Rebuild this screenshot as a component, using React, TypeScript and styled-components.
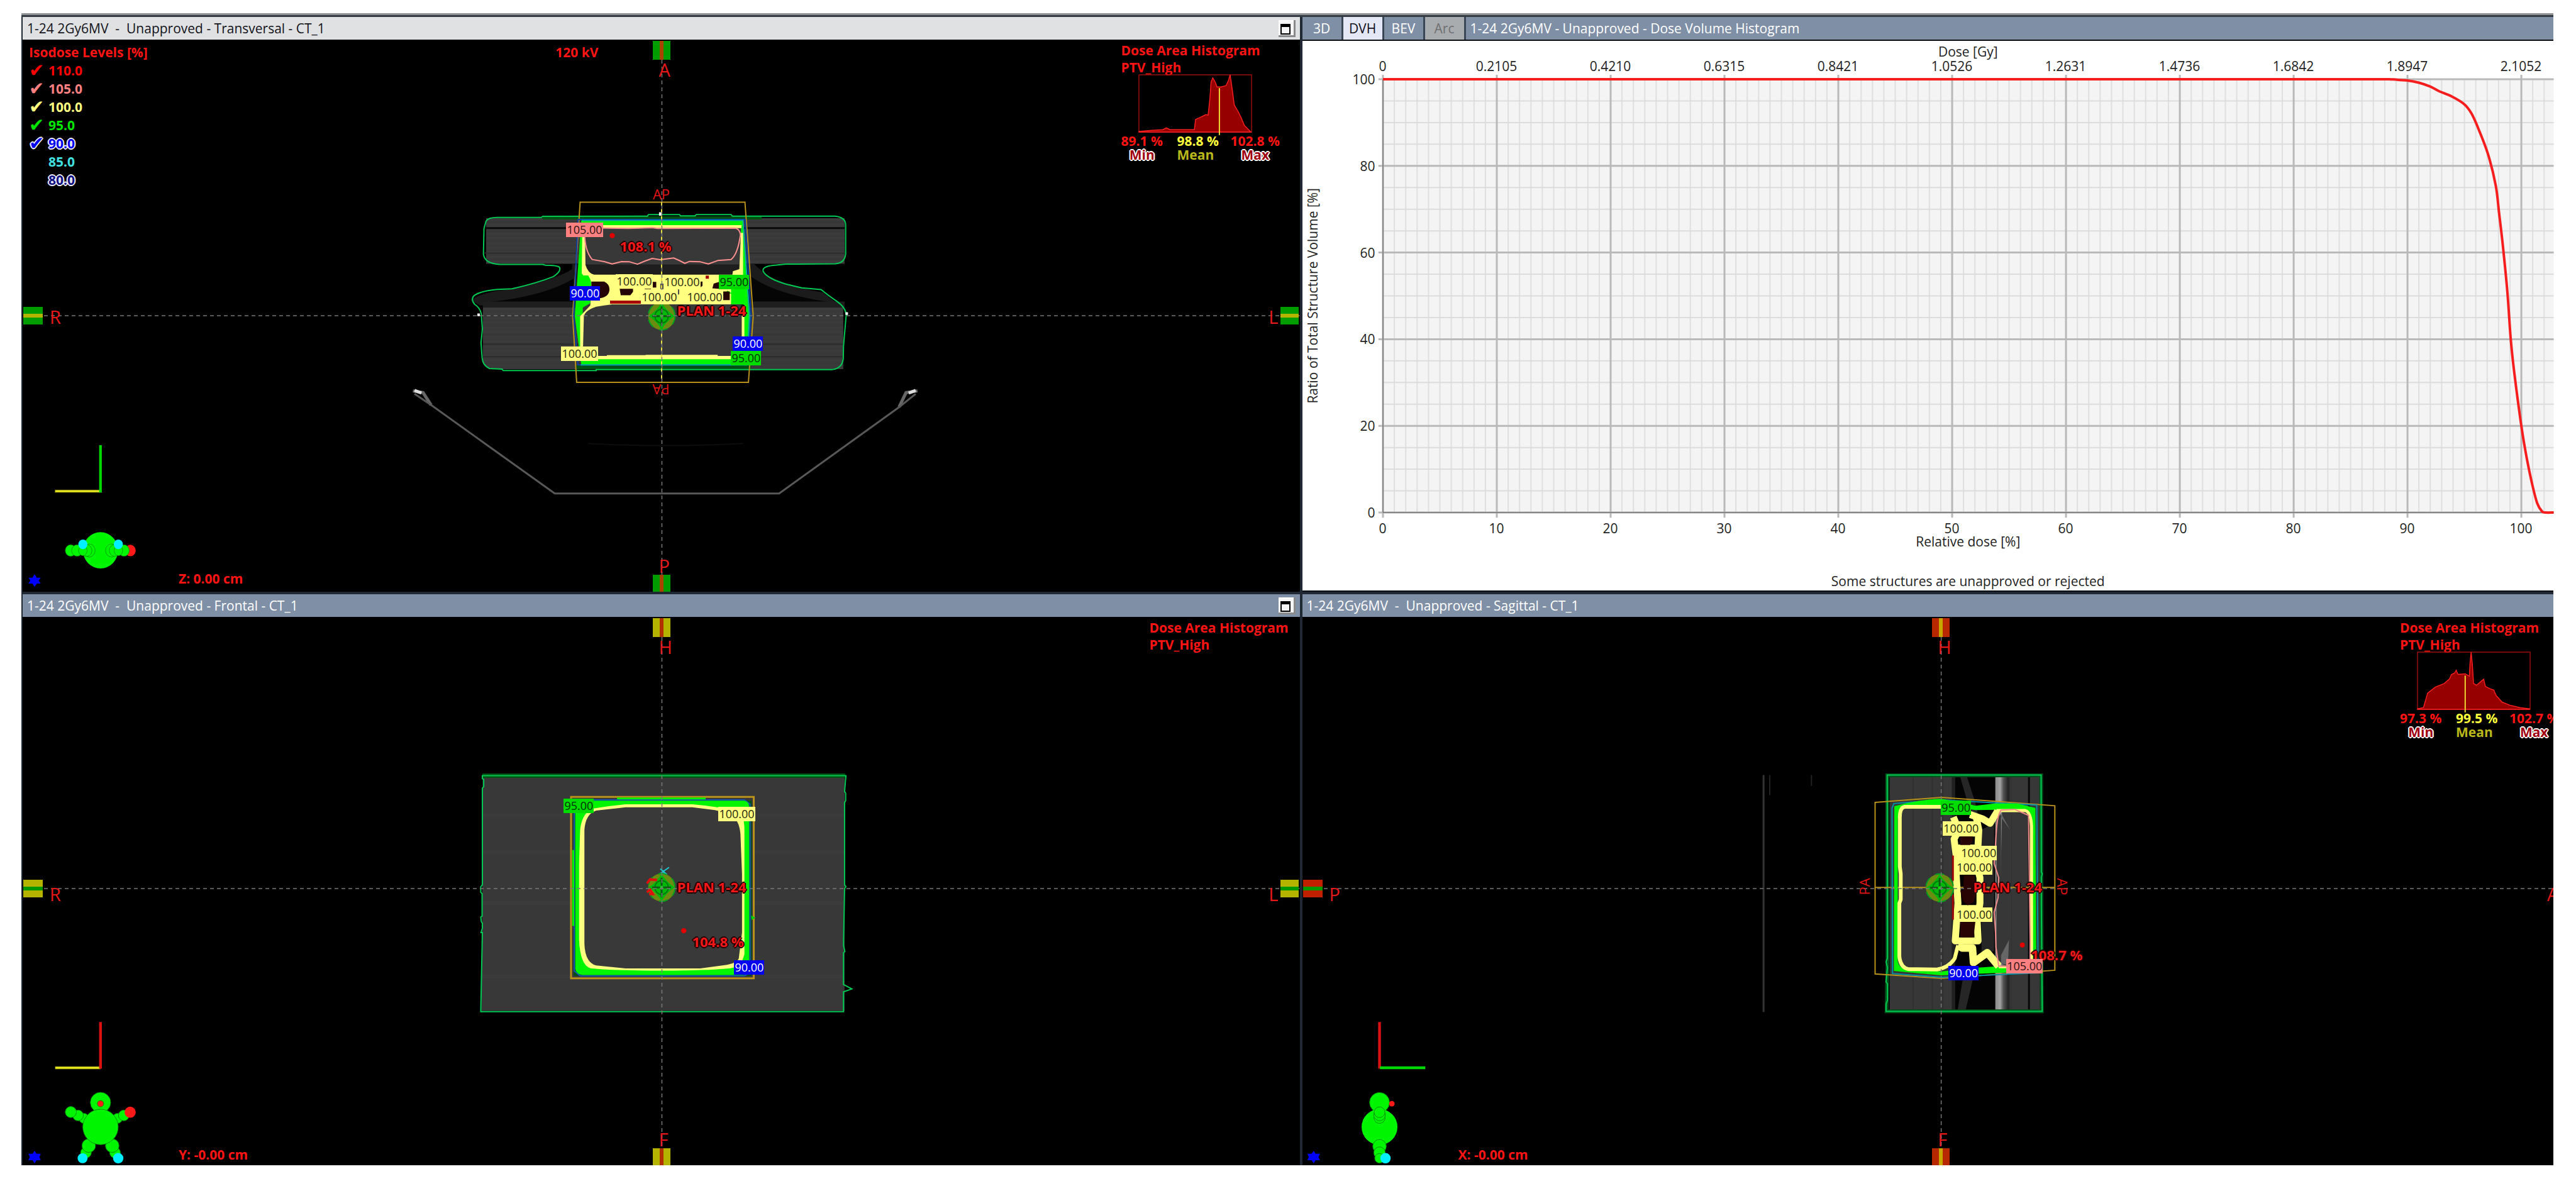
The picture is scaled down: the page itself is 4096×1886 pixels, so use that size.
import React from 'react';
import styled, { createGlobalStyle, css } from 'styled-components';

const GlobalStyle = createGlobalStyle`
  * { box-sizing: border-box; }
  body { margin: 0; background: #fff; }
`;

const font = `'Open Sans', 'Noto Sans', sans-serif`;
const navy = '#1f2833';
const slate = '#7f8fa6';
const RED = '#ff1414';
const ISO_100 = '#ffff80';
const ISO_95 = '#00f500';
const OUTLINE = '#00c853';

/* ---------- shell ---------- */

const Page = styled.main`
  display: flex;
  height: 100vh;
  padding: 21px 36px 33px 34px;
  font: 21px/27px ${font};
`;

const Workspace = styled.div`
  flex: 1;
  min-width: 0;
  display: grid;
  grid-template-columns: minmax(0, 2030fr) minmax(0, 1989fr);
  grid-template-rows: minmax(0, 914fr) minmax(0, 908fr);
  gap: 4px;
  padding: 3px 0 0 2px;
  background: ${navy};
  border-top: 3px solid #8d9193;
  box-shadow: inset 0 3px 0 #343b42;
`;

const Panel = styled.section`
  display: flex;
  flex-direction: column;
  min-width: 0;
  min-height: 0;
`;

const TitleBar = styled.header<{ $active?: boolean }>`
  display: flex;
  align-items: center;
  flex: none;
  height: 36px;
  padding-right: 7px;
  background: ${(p) => (p.$active ? '#dfe1e2' : slate)};
  color: ${(p) => (p.$active ? '#14141c' : '#fff')};
`;

const Title = styled.h2`
  flex: 1;
  margin: 0;
  padding-left: 7px;
  font: 400 21px/27px ${font};
  white-space: pre;
`;

const MaxButton = styled.button`
  width: 27px;
  height: 27px;
  padding: 3px 0 0 3px;
  border: 0;
  background: #f6f6f6;
  box-shadow: inset -3px -3px 0 #8a8a8a, inset 2px 2px 0 #fff;
  line-height: 0;
`;

const MaxGlyph = styled.span`
  display: block;
  width: 16px;
  height: 17px;
  border: 2px solid #000;
  border-top-width: 5px;
`;

const Maximize = () => (
  <MaxButton aria-label="Maximize"><MaxGlyph /></MaxButton>
);

/* ---------- slice viewport ---------- */

const Viewport = styled.div`
  position: relative;
  flex: 1;
  min-height: 0;
  overflow: hidden;
  background: #000;
`;

const Layer = styled.svg`
  position: absolute;
  inset: 0;
  width: 100%;
  height: 100%;
`;

const Origin = styled.div<{ $cx: string; $cy: string }>`
  position: absolute;
  left: ${(p) => p.$cx};
  top: ${(p) => p.$cy};
  width: 0;
  height: 0;
`;

const Scene = styled.svg`
  position: absolute;
  left: 0;
  top: 0;
  width: 1px;
  height: 1px;
  overflow: visible;
  path, rect, ellipse { vector-effect: non-scaling-stroke; }
`;

type TagKind = '105' | '100' | '95' | '90';
const tagColors: Record<TagKind, [string, string]> = {
  '105': ['#ff8080', '#2b1010'],
  '100': [ISO_100, '#26260c'],
  '95': ['#00dc00', '#003000'],
  '90': ['#0000f0', '#fff'],
};

const Tag = styled.span<{ $kind: TagKind; $x: number; $y: number }>`
  position: absolute;
  left: ${(p) => p.$x}px;
  top: ${(p) => p.$y}px;
  padding: 0 1px;
  background: ${(p) => tagColors[p.$kind][0]};
  color: ${(p) => tagColors[p.$kind][1]};
  font-size: 18px;
  line-height: 23px;
  white-space: nowrap;
`;

const Note = styled.span<{ $x: number; $y: number }>`
  position: absolute;
  left: ${(p) => p.$x}px;
  top: ${(p) => p.$y}px;
  color: #f01818;
  font-weight: 700;
  font-size: 22px;
  line-height: 24px;
  white-space: nowrap;
  text-shadow: 2px 0 #200, -2px 0 #200, 0 2px #200, 0 -2px #200, 1px 1px #200, -1px -1px #200;
`;

const BeamLabel = styled.span<{ $x: number; $y: number; $turn?: number }>`
  position: absolute;
  left: ${(p) => p.$x}px;
  top: ${(p) => p.$y}px;
  color: #e01414;
  font-size: 22px;
  line-height: 24px;
  transform: translate(-50%, -50%) rotate(${(p) => p.$turn ?? 0}deg);
`;

const edges = {
  top: css`top: 2px; width: 28px; height: 30px; transform: translateX(-50%);`,
  bottom: css`bottom: 0; width: 28px; height: 27px; transform: translateX(-50%);`,
  left: css`left: 1px; width: 31px; height: 28px; transform: translateY(-50%);`,
  right: css`right: 2px; width: 29px; height: 28px; transform: translateY(-50%);`,
};
type Edge = keyof typeof edges;

const Marker = styled.i<{ $edge: Edge; $at: string; $outer: string; $inner: string }>`
  position: absolute;
  ${(p) => edges[p.$edge]}
  ${(p) => (p.$edge === 'top' || p.$edge === 'bottom' ? `left: ${p.$at};` : `top: ${p.$at};`)}
  background: linear-gradient(
    ${(p) => (p.$edge === 'top' || p.$edge === 'bottom' ? 'to right' : 'to bottom')},
    ${(p) => `${p.$outer} 40%, ${p.$inner} 40%, ${p.$inner} 61%, ${p.$outer} 61%`}
  );
`;

const letterEdges = {
  top: css`top: 30px; margin-left: -5px;`,
  bottom: css`bottom: 23px; margin-left: -5px;`,
  left: css`left: 43px; margin-top: -16px;`,
  right: css`right: 34px; margin-top: -16px;`,
};

const EdgeLetter = styled.span<{ $edge: Edge; $at: string }>`
  position: absolute;
  ${(p) => letterEdges[p.$edge]}
  ${(p) => (p.$edge === 'top' || p.$edge === 'bottom' ? `left: ${p.$at};` : `top: ${p.$at};`)}
  color: #e61818;
  font: 400 29px/36px ${font};
`;

const Readout = styled.span<{ $x: number; $bottom: number }>`
  position: absolute;
  left: ${(p) => p.$x}px;
  bottom: ${(p) => p.$bottom}px;
  color: ${RED};
  font-weight: 700;
`;

const Corner = styled.svg`
  position: absolute;
  left: 0;
  bottom: 0;
  width: 247px;
  height: 261px;
`;

interface View { sx: number; sy: number; ox: number; oy: number }
const local = (v: View, x: number, y: number) => ({
  $x: Math.round((x - v.ox) * v.sx),
  $y: Math.round((y - v.oy) * v.sy),
});
const toView = (v: View) => `scale(${v.sx} ${v.sy}) translate(${-v.ox} ${-v.oy})`;

type TagData = [TagKind, string, number, number];
const Tags = ({ view, items }: { view: View; items: TagData[] }) => (
  <>
    {items.map(([kind, text, x, y], i) => (
      <Tag key={i} $kind={kind} {...local(view, x, y)}>{text}</Tag>
    ))}
  </>
);

const CrossLines = ({ cx, cy }: { cx: string; cy: string }) => (
  <Layer aria-hidden="true">
    <g stroke="#777" strokeWidth="1.5" strokeDasharray="6 5">
      <line x1={cx} x2={cx} y1="32" y2="100%" />
      <line x1="34" x2="100%" y1={cy} y2={cy} />
    </g>
  </Layer>
);

const IsoCenter = ({ rx, ry }: { rx: number; ry: number }) => (
  <g>
    <ellipse rx={rx} ry={ry} fill="#6b8c10" />
    <ellipse rx={rx} ry={ry} fill="none" stroke="#00a020" strokeWidth="2" strokeDasharray="14 10" />
    <path d={`M0 ${-ry} Q${rx * 0.35} ${-ry * 0.35} ${rx} 0 Q${rx * 0.35} ${ry * 0.35} 0 ${ry} Q${-rx * 0.35} ${ry * 0.35} ${-rx} 0 Q${-rx * 0.35} ${-ry * 0.35} 0 ${-ry}Z`} fill="#00b80a" />
    <ellipse rx={rx * 0.5} ry={ry * 0.5} fill="none" stroke="#007a10" strokeWidth="2" />
    <path d={`M${-rx * 0.7} 0H${rx * 0.7}M0 ${-ry * 0.7}V${ry * 0.7}`} stroke="#0b5a10" strokeWidth="3" />
    <ellipse rx={rx * 0.12} ry={ry * 0.12} fill="#00e000" />
  </g>
);

/* ---------- dose area histogram ---------- */

const DahBox = styled.aside<{ $offset: number }>`
  position: absolute;
  top: 4px;
  left: calc(100% - ${(p) => p.$offset}px);
  width: 260px;
  color: ${RED};
  font-weight: 700;
  white-space: nowrap;
`;

const DahPlot = styled.svg`
  display: block;
  width: 180px;
  height: 92px;
  margin: -2px 0 2px 28px;
  overflow: visible;
`;

const DahValues = styled.div`
  display: grid;
  grid-template-columns: 89px 85px 86px;
  justify-items: start;
  line-height: 22px;
`;

const DahCell = styled.div<{ $mean?: boolean }>`
  text-align: ${(p) => (p.$mean ? 'left' : 'center')};
  color: ${(p) => (p.$mean ? '#ffff3c' : RED)};
`;

const DahCaption = styled.div<{ $mean?: boolean }>`
  font-weight: 700;
  color: ${(p) => (p.$mean ? '#b9b91c' : '#a00010')};
  ${(p) => !p.$mean && css`
    text-shadow: 2px 0 #fff, -2px 0 #fff, 0 2px #fff, 0 -2px #fff, 1px 1px #fff, -1px -1px #fff, 1px -1px #fff, -1px 1px #fff;
  `}
`;

interface DahProps { offset: number; shape?: string; mean?: number; values?: [string, string, string] }
const DoseAreaHistogram = ({ offset, shape, mean, values }: DahProps) => (
  <DahBox $offset={offset}>
    <div>Dose Area Histogram</div>
    <div>PTV_High</div>
    {shape && values && (
      <>
        <DahPlot viewBox="0 0 190 96" preserveAspectRatio="none">
          <rect x="0" y="0" width="189" height="95" fill="none" stroke="#a01010" strokeWidth="1.5" />
          <path d={shape} fill="#960000" stroke="#ff2020" strokeWidth="1.5" />
          <path d={`M${mean} ${mean === 80 ? 39 : 22}V100`} stroke="#f5e532" strokeWidth="2" />
        </DahPlot>
        <DahValues>
          <DahCell>{values[0]}<DahCaption>Min</DahCaption></DahCell>
          <DahCell $mean>{values[1]}<DahCaption $mean>Mean</DahCaption></DahCell>
          <DahCell>{values[2]}<DahCaption>Max</DahCaption></DahCell>
        </DahValues>
      </>
    )}
  </DahBox>
);

/* ---------- isodose legend ---------- */

const Legend = styled.fieldset`
  position: absolute;
  left: 10px;
  top: 6px;
  margin: 0;
  padding: 0;
  border: 0;
  font-weight: 700;
  line-height: 29px;
`;

const LegendTitle = styled.legend`
  padding: 0;
  color: ${RED};
`;

const Level = styled.label<{ $color: string; $halo?: boolean }>`
  display: flex;
  color: ${(p) => p.$color};
  ${(p) => p.$halo && css`
    text-shadow: 2px 0 #eef, -2px 0 #eef, 0 2px #eef, 0 -2px #eef, 1px 1px #eef, -1px -1px #eef, 1px -1px #eef, -1px 1px #eef;
  `}
`;

const LevelTick = styled.input`
  appearance: none;
  width: 31px;
  height: 29px;
  margin: 0;
  color: inherit;
  font: 700 29px/29px 'DejaVu Sans', sans-serif;
  text-shadow: inherit;
  &:checked::before { content: '✔'; }
`;

const levels = [
  { value: '110.0', color: '#ff0000', on: true },
  { value: '105.0', color: '#ff8080', on: true },
  { value: '100.0', color: '#ffff80', on: true },
  { value: '95.0', color: '#00e600', on: true },
  { value: '90.0', color: '#0000f0', on: true, halo: true },
  { value: '85.0', color: '#40e0e0', on: false },
  { value: '80.0', color: '#101080', on: false, halo: true },
];

const TubeVoltage = styled.span`
  position: absolute;
  left: calc(50% - 168px);
  top: 7px;
  color: ${RED};
  font-weight: 700;
`;

/* ---------- transversal ---------- */

const middle = '50.06%';
const tv: View = { sx: 0.42475, sy: 0.3398, ox: 775, oy: 638 };
const bodyOutline =
  'M118 195Q126 178 160 178L325 178L330 173L722 172L726 165L842 165L846 171L900 171L905 165L1035 165L1040 172L1425 172Q1465 178 1464 215L1464 350Q1460 392 1425 395L1240 397L1205 401Q1150 405 1155 430Q1170 465 1240 490L1300 508L1372 516Q1400 545 1430 570Q1465 600 1466 635L1456 780L1455 840Q1450 885 1415 890L530 890L530 895L182 895L178 888L130 885Q105 870 103 835L99 765L104 700L100 630Q95 600 75 585Q58 560 75 542Q100 522 160 515L215 512Q310 485 370 455Q400 430 393 412Q385 402 340 402L330 398L170 398Q112 395 108 350L110 230Z';

const Transversal = () => (
  <Panel>
    <TitleBar $active>
      <Title>1-24 2Gy6MV  -  Unapproved - Transversal - CT_1</Title>
      <Maximize />
    </TitleBar>
    <Viewport>
      <Origin $cx={middle} $cy="50%">
        <Scene aria-hidden="true">
          <defs>
            <pattern id="rows" width="10" height="44" patternUnits="userSpaceOnUse">
              <rect width="10" height="44" fill="#393939" />
              <rect y="8" width="10" height="4" fill="#3d3d3d" />
              <rect y="22" width="10" height="3" fill="#353535" />
              <rect y="33" width="10" height="4" fill="#3c3c3c" />
            </pattern>
          </defs>
          <g transform={toView(tv)}>
            <path d="M-156 990L-118 998L-88 1056M1733 990L1690 998L1664 1066" fill="none" stroke="#666" strokeWidth="5" />
            <path d="M-150 988l26 12M1726 988l-26 12" stroke="#ddd" strokeWidth="5" />
            <path d="M-150 1004L-88 1056L375 1470L1215 1470L1664 1066L1726 1004" fill="none" stroke="#585858" strokeWidth="3" />
            <path d="M500 1236Q775 1256 1080 1236" fill="none" stroke="#0d0d0d" strokeWidth="2" />
            <path d="M118 182H1460V395H118Z" fill="url(#rows)" />
            <path d="M440 395H1120L1160 440Q1240 500 1380 530L1440 590H95L60 565Q110 525 200 515Q380 470 440 420Z" fill="#1b1b1b" />
            <path d="M120 575Q330 550 445 465L445 590H120ZM1110 455Q1200 540 1430 580L1110 590Z" fill="#050505" />
            <path d="M106 578H1455V888H130Q106 870 106 840Z" fill="url(#rows)" />
            <path d="M106 572H1460V600H106Z" fill="#1e1e1e" />
            <path d="M112 228H1462" stroke="#0a0a0a" strokeWidth="3" />
            <path d="M112 345H1462M106 771H1458M106 830H1458" stroke="#2b2b2b" strokeWidth="2" />
            <path d="M330 173H1150V188H330ZM455 870H1110V888H455Z" fill="#005212" />
            <path d={bodyOutline} fill="none" stroke={OUTLINE} strokeWidth="2" />
            <path d="M90 628v12M1468 622v12M770 154v16" stroke="#fff" strokeWidth="4" />

            <path d="M470 107H1087L1118 640L1100 950H457L442 640Z" fill="none" stroke="#b8921c" strokeWidth="2" />
            <path d="M462 188H1088L1110 640L1098 868H462L446 640Z" fill="none" stroke="#0b3fa8" strokeWidth="2" />
            <path d="M474 192L1080 192L1106 640L1096 866L474 866L450 640Z M490 214L488 640L482 838L1080 838L1084 640L1070 214Z" fill={ISO_95} fillRule="evenodd" />
            <path d="M476 192H1080L1104 640L1094 868H472" fill="none" stroke="#00a8a8" strokeWidth="2" />

            <path d="M488 214H1072V838H480V590Z" fill="#383838" />
            <path d="M488 398H1072V450H488Z" fill="#1e1e1e" />
            <path d="M488 214H1074V228H488Z" fill={ISO_100} />
            <path d="M478 826H570V823H715V821H985V826H1085V842H478Z" fill={ISO_100} />
            <path d="M478 240H488L490 400Q500 440 522 446H1040L1042 430L1066 420L1072 250H1080V480L1050 500L1035 585H590Q560 590 530 596Q490 612 484 640L480 826H470V640L508 590L512 500L476 440Z" fill={ISO_100} />
            <path d="M1075 600H1085V826H1075Z" fill={ISO_100} />
            <path d="M468 450H500Q516 480 510 500L508 580L480 600L468 640Z" fill={ISO_95} />
            <path d="M1035 460H1090V585H1035ZM1020 520L1040 535H1018Z" fill={ISO_95} />
            <path d="M512 478H560Q580 490 580 515Q578 550 545 556L512 550ZM618 512H668V526L658 542H622ZM712 480H755V506H738L735 514H712ZM905 478H928V498L910 515ZM970 488L990 480V512L965 510ZM1005 525H1030V565H1005Z" fill="#240404" />
            <path d="M770 488h12v26h-12zM836 515h5v24h-5z" fill="#4a4a4a" />
            <path d="M582 575H702M940 458h12" stroke="#a80808" strokeWidth="5" />
            <path d="M487 240Q485 330 515 375L560 385L590 396L625 385L655 386L685 397Q715 380 740 370L770 376L820 368Q840 378 862 393L880 384L920 386L950 396L985 380L1035 375Q1060 350 1070 260Q1068 232 1050 228L760 230L740 226L650 230L500 227" fill="none" stroke="#ff9090" strokeWidth="2" strokeLinejoin="round" />
            <ellipse cx="590" cy="263" rx="10" ry="12" fill="#e00000" />
            <path d="M775 107V950" stroke="#e8e040" strokeWidth="2" strokeDasharray="6 5" />
            <g transform="translate(775 640)"><IsoCenter rx={50} ry={65} /></g>
          </g>
        </Scene>
      </Origin>
      <CrossLines cx={middle} cy="50%" />
      <Origin $cx={middle} $cy="50%">
        <BeamLabel {...local(tv, 773, 66)}>AP</BeamLabel>
        <BeamLabel $turn={180} {...local(tv, 773, 985)}>PA</BeamLabel>
        <Note {...local(tv, 618, 277)}>108.1 %</Note>
        <Note {...local(tv, 831, 576)}>PLAN 1-24</Note>
        <Tags
          view={tv}
          items={[
            ['105', '105.00', 416, 203],
            ['100', '100.00', 604, 443],
            ['100', '100.00', 783, 448],
            ['95', '95.00', 989, 447],
            ['100', '100.00', 698, 517],
            ['100', '100.00', 867, 517],
            ['90', '90.00', 432, 500],
            ['90', '90.00', 1041, 735],
            ['95', '95.00', 1033, 804],
            ['100', '100.00', 399, 782],
          ]}
        />
      </Origin>
      <Marker $edge="top" $at={middle} $outer="#009c00" $inner="#a84400" />
      <Marker $edge="bottom" $at={middle} $outer="#009c00" $inner="#a84400" />
      <Marker $edge="left" $at="50%" $outer="#009c00" $inner="#b4b400" />
      <Marker $edge="right" $at="50%" $outer="#009c00" $inner="#b4b400" />
      <EdgeLetter $edge="top" $at={middle}>A</EdgeLetter>
      <EdgeLetter $edge="bottom" $at={middle}>P</EdgeLetter>
      <EdgeLetter $edge="left" $at="50%">R</EdgeLetter>
      <EdgeLetter $edge="right" $at="50%">L</EdgeLetter>
      <Legend>
        <LegendTitle>Isodose Levels [%]</LegendTitle>
        {levels.map((l) => (
          <Level key={l.value} $color={l.color} $halo={l.halo}>
            <LevelTick type="checkbox" defaultChecked={l.on} />
            {l.value}
          </Level>
        ))}
      </Legend>
      <TubeVoltage>120 kV</TubeVoltage>
      <DoseAreaHistogram
        offset={284}
        mean={135}
        values={['89.1 %', '98.8 %', '102.8 %']}
        shape="M0 94L22 92L40 91L46 88L52 91L93 91L95 74L104 70L112 66L116 67L119 40L121 12L124 5L128 12L131 20L138 20L146 18L150 10L153 0L156 20L160 50L166 60L172 72L177 84L183 90L188 95L0 95Z"
      />
      <Corner viewBox="38 715 260 274" aria-hidden="true">
        <g transform="translate(0 700) scale(.4464 .3333)">
          <path d="M206 363H376" stroke="#8a8a10" strokeWidth="15" />
          <path d="M208 363H374" stroke="#ffff28" strokeWidth="6" />
          <path d="M377 132V370" stroke="#00d800" strokeWidth="10" />
          <g fill="#00f500" stroke="#048c04" strokeWidth="2">
            <ellipse cx="489" cy="661" rx="20" ry="29" fill="#ff1a1a" stroke="none" />
            <ellipse cx="465" cy="661" rx="20" ry="29" />
            <ellipse cx="265" cy="661" rx="20" ry="29" />
            <ellipse cx="289" cy="661" rx="20" ry="29" />
            <ellipse cx="377" cy="660" rx="66" ry="91" stroke="none" />
            <ellipse cx="335" cy="661" rx="22" ry="33" />
            <ellipse cx="325" cy="661" rx="20" ry="29" />
            <ellipse cx="311" cy="661" rx="16" ry="26" />
            <ellipse cx="418" cy="661" rx="22" ry="33" />
            <ellipse cx="430" cy="661" rx="20" ry="29" />
            <ellipse cx="444" cy="661" rx="16" ry="26" />
            <ellipse cx="311" cy="630" rx="17" ry="24" fill="#00f0ff" stroke="none" />
            <ellipse cx="444" cy="630" rx="17" ry="24" fill="#00f0ff" stroke="none" />
          </g>
          <path d="M130 780L138 798H153L145 812L153 827H138L130 844L122 827H107L114 812L107 798H122Z" fill="#0000ff" />
        </g>
      </Corner>
      <Readout $x={248} $bottom={7}>Z: 0.00 cm</Readout>
    </Viewport>
  </Panel>
);

/* ---------- frontal ---------- */

const fv: View = { sx: 0.42475, sy: 0.5826, ox: 775, oy: 760 };
const lower = '49.55%';
const lowerLetter = 'calc(49.55% + 7px)';

const Frontal = () => (
  <Panel>
    <TitleBar>
      <Title>1-24 2Gy6MV  -  Unapproved - Frontal - CT_1</Title>
      <Maximize />
    </TitleBar>
    <Viewport>
      <Origin $cx={middle} $cy={lower}>
        <Scene aria-hidden="true">
          <g transform={toView(fv)}>
            <path d="M105 452H1460V1094H100L104 760Z" fill="#383838" />
            <path d="M106 660H1458M104 800H1456M103 1000H1456M106 560H1458" stroke="#3b3b3b" strokeWidth="6" />
            <path d="M104 452H1462" stroke="#005212" strokeWidth="7" />
            <path d="M104 452L104 460L109 462V482L104 486V495L104 750L98 755V770L103 774V835L98 838L100 850L104 855V868L99 880L104 880L98 1096H1456V1042L1487 1034L1456 1022V935L1461 932L1456 915L1460 760L1465 755L1460 750V525L1464 520V500L1460 495L1465 452Z" fill="none" stroke={OUTLINE} strokeWidth="2" />
            <path d="M436 510H1120V1005H436Z" fill="none" stroke="#b8921c" strokeWidth="3" />
            <path d="M444 520H1112V998H446Z" fill="#00521a" />
            <path d="M452 518H1085L1106 530V990L1085 998H470L448 985V535Z" fill="none" stroke="#1458b0" strokeWidth="2" />
            <path d="M608 514H940M444 655V862" stroke={ISO_95} strokeWidth="3" />
            <path d="M475 520H1085Q1103 522 1103 540V975Q1103 994 1080 996H480Q452 994 452 975V540Q452 520 475 520Z" fill={ISO_95} />
            <path d="M515 542Q580 534 640 530H890Q990 536 1060 550Q1085 556 1085 600V940L1070 972L1030 978Q940 984 780 984Q600 984 510 978Q470 970 466 900V690L470 600Q476 556 515 542Z" fill={ISO_100} />
            <path d="M530 547Q580 543 640 538H890L975 546L1030 556Q1066 572 1070 610L1076 720V880L1064 950Q1060 962 1020 968L920 978H640L530 970Q488 962 486 910V600Q490 556 530 547Z" fill="#393939" />
            <path d="M770 706L795 722M803 702L764 722M783 710V722" stroke="#20c8d0" strokeWidth="2" />
            <g transform="translate(775 757)"><IsoCenter rx={50} ry={38} /></g>
            <path d="M720 746L732 735L758 737M720 770L732 763L742 775H728" fill="none" stroke="#e01010" strokeWidth="4" />
            <ellipse cx="858" cy="875" rx="10" ry="7" fill="#e00000" />
            <path d="M1110 833l16 7l-14 6z" fill="#00d000" />
          </g>
        </Scene>
      </Origin>
      <CrossLines cx={middle} cy={lower} />
      <Origin $cx={middle} $cy={lower}>
        <Note {...local(fv, 831, 735)}>PLAN 1-24</Note>
        <Note {...local(fv, 887, 883)}>104.8 %</Note>
        <Tags
          view={fv}
          items={[
            ['95', '95.00', 407, 515],
            ['100', '100.00', 986, 537],
            ['90', '90.00', 1045, 955],
          ]}
        />
      </Origin>
      <Marker $edge="top" $at={middle} $outer="#b4b400" $inner="#b03000" />
      <Marker $edge="bottom" $at={middle} $outer="#b4b400" $inner="#b03000" />
      <Marker $edge="left" $at={lower} $outer="#b4b400" $inner="#009800" />
      <Marker $edge="right" $at={lower} $outer="#b4b400" $inner="#009800" />
      <EdgeLetter $edge="top" $at={middle}>H</EdgeLetter>
      <EdgeLetter $edge="bottom" $at={middle}>F</EdgeLetter>
      <EdgeLetter $edge="left" $at={lowerLetter}>R</EdgeLetter>
      <EdgeLetter $edge="right" $at={lowerLetter}>L</EdgeLetter>
      <DoseAreaHistogram offset={239} />
      <Corner viewBox="38 1674 260 274" aria-hidden="true">
        <g transform="translate(30 1440) scale(.3333)">
          <path d="M187 1036H415" stroke="#a8a810" strokeWidth="14" />
          <path d="M189 1036H413" stroke="#ffff28" strokeWidth="6" />
          <path d="M415 806V1040" stroke="#d81010" strokeWidth="14" />
          <g fill="#00f500" stroke="#048c04" strokeWidth="3">
            <circle cx="332" cy="1290" r="25" />
            <circle cx="302" cy="1275" r="27" />
            <circle cx="266" cy="1258" r="28" />
            <circle cx="500" cy="1290" r="25" />
            <circle cx="532" cy="1275" r="27" />
            <circle cx="564" cy="1259" r="28" fill="#ff1a1a" stroke="none" />
            <circle cx="342" cy="1462" r="27" />
            <circle cx="488" cy="1462" r="27" />
            <circle cx="356" cy="1427" r="34" />
            <circle cx="474" cy="1427" r="34" />
            <circle cx="325" cy="1490" r="25" fill="#00f0ff" stroke="none" />
            <circle cx="504" cy="1490" r="26" fill="#00f0ff" stroke="none" />
            <circle cx="415" cy="1210" r="51" />
            <circle cx="415" cy="1333" r="89" />
            <circle cx="415" cy="1216" r="16" fill="#ff1a1a" />
          </g>
          <path d="M84 1453L94 1468H115L108 1484L115 1500H94L84 1516L74 1500H53L60 1484L53 1468H74Z" fill="#0000ff" />
        </g>
      </Corner>
      <Readout $x={248} $bottom={3}>Y: -0.00 cm</Readout>
    </Viewport>
  </Panel>
);

/* ---------- sagittal ---------- */

const sv: View = { sx: 0.3641, sy: 0.5826, ox: 637, oy: 760 };
const sagittalX = '51.05%';

const FarLetter = styled.span`
  position: absolute;
  left: calc(100% - 10px);
  top: ${lowerLetter};
  margin-top: -16px;
  color: #e61818;
  font: 400 29px/36px ${font};
`;

const Sagittal = () => (
  <Panel>
    <TitleBar>
      <Title>1-24 2Gy6MV  -  Unapproved - Sagittal - CT_1</Title>
    </TitleBar>
    <Viewport>
      <Origin $cx={sagittalX} $cy={lower}>
        <Scene aria-hidden="true">
          <defs>
            <linearGradient id="rail">
              <stop offset="0" stopColor="#8a8a8a" />
              <stop offset=".3" stopColor="#a4a4a4" />
              <stop offset=".5" stopColor="#555" />
              <stop offset=".8" stopColor="#222" />
              <stop offset="1" stopColor="#3a3a3a" />
            </linearGradient>
          </defs>
          <g transform={toView(sv)}>
            <path d="M-137 450V1097" stroke="#333" strokeWidth="3" />
            <path d="M-110 450V505M72 450V480" stroke="#222" strokeWidth="2" />
            <path d="M403 452H1076V1095H403Z" fill="#040404" />
            <path d="M414 456H692V1093H414Z" fill="#373737" />
            <path d="M516 456V1093M600 456V1093M645 456V1093" stroke="#303030" strokeWidth="2" />
            <path d="M685 456H700V1093H685Z" fill="#202020" />
            <path d="M722 456H752L790 530L800 560H770ZM710 1093H745L780 1000H735ZM815 600L870 580V930L815 945Z" fill="#262626" />
            <path d="M875 448H945V1098H875Z" fill="url(#rail)" />
            <path d="M905 540H945V965H890Z" fill="#373737" />
            <path d="M880 548L940 600L905 560ZM885 960L935 900L930 970Z" fill="#666" />
            <path d="M880 560H900V960H880Z" fill="#373737" />
            <path d="M945 456H1070V1093H945Z" fill="#373737" />
            <path d="M1022 456V1093" stroke="#080808" strokeWidth="3" />
            <path d="M403 451H1075L1078 1095H400L404 960Z" fill="none" stroke="#00521a" strokeWidth="6" />
            <path d="M403 450H1075L1076 715L1080 720L1076 728V805L1080 1095H398V1075L404 1065L404 1020L398 1015L404 975L398 960L404 950Z" fill="none" stroke={OUTLINE} strokeWidth="2" />

            <path d="M350 525L640 511L1135 534V983L640 1005L350 993Z M350 757H1135" fill="none" stroke="#b8921c" strokeWidth="2" />
            <path d="M424 540L432 528L640 518L1056 532L1062 990L640 1002L426 992Z" fill="none" stroke="#0090a8" strokeWidth="2" />
            <path d="M434 535Q540 517 640 515L790 534L870 528L970 528L1050 540L1054 980L985 988L640 997L432 985Z M470 540Q452 545 449 570V960Q455 975 480 980L640 986L800 976L890 972L1036 972V580Q1030 552 1000 545L880 545L790 546L640 533Z" fill={ISO_95} fillRule="evenodd" />

            <g fill="none" stroke={ISO_100} strokeLinejoin="round">
              <path d="M690 537H480Q459 538 458 565V700L462 720V790L456 800V945Q460 975 495 980L620 981Q675 975 698 950L712 915" strokeWidth="6" />
              <path d="M880 547H1005Q1030 550 1033 590V960" strokeWidth="5" />
              <path d="M692 565L715 600L695 625L706 680L704 720L712 800L706 850L700 903H800L796 850L808 800V730L795 700L803 600L790 560" strokeWidth="11" />
              <path d="M765 558L820 570L852 582L885 548" strokeWidth="11" />
              <path d="M712 915L730 922L775 922L780 962L840 935L890 972" strokeWidth="12" />
              <path d="M890 974H1000" strokeWidth="4" />
            </g>
            <path d="M700 580H800V618H700ZM705 640H800V720H705ZM708 805H812V850H708Z" fill={ISO_100} />
            <path d="M722 618H776V632L765 641H722ZM738 724H786V755L790 780L780 797L755 806L735 795L722 765H735ZM722 850H788L780 893H722Z" fill="#280404" />
            <path d="M690 670V850" stroke="#a00808" strokeWidth="3" strokeDasharray="40 22" />
            <path d="M900 546Q884 560 880 600L870 692L890 730L887 785L870 825L876 880L878 920L890 972H1005L1027 960V900L1020 560L960 544Z" fill="none" stroke="#f08a8a" strokeWidth="2" />
            <ellipse cx="993" cy="914" rx="11" ry="7" fill="#e00000" />
            <g transform="translate(632 758)"><IsoCenter rx={60} ry={38} /></g>
          </g>
        </Scene>
      </Origin>
      <CrossLines cx={sagittalX} cy={lower} />
      <Origin $cx={sagittalX} $cy={lower}>
        <BeamLabel $turn={-90} {...local(sv, 301, 755)}>PA</BeamLabel>
        <BeamLabel $turn={90} {...local(sv, 1171, 755)}>AP</BeamLabel>
        <Note {...local(sv, 777, 735)}>PLAN 1-24</Note>
        <Note {...local(sv, 1030, 920)}>108.7 %</Note>
        <Tags
          view={sv}
          items={[
            ['95', '95.00', 638, 520],
            ['100', '100.00', 645, 577],
            ['100', '100.00', 722, 643],
            ['100', '100.00', 704, 683],
            ['100', '100.00', 704, 811],
            ['90', '90.00', 669, 971],
            ['105', '105.00', 924, 952],
          ]}
        />
      </Origin>
      <Marker $edge="top" $at={sagittalX} $outer="#b82800" $inner="#c8a800" />
      <Marker $edge="bottom" $at={sagittalX} $outer="#b82800" $inner="#c8a800" />
      <Marker $edge="left" $at={lower} $outer="#c02000" $inner="#009800" />
      <EdgeLetter $edge="top" $at={sagittalX}>H</EdgeLetter>
      <EdgeLetter $edge="bottom" $at={sagittalX}>F</EdgeLetter>
      <EdgeLetter $edge="left" $at={lowerLetter}>P</EdgeLetter>
      <FarLetter>A</FarLetter>
      <DoseAreaHistogram
        offset={244}
        mean={80}
        values={['97.3 %', '99.5 %', '102.7 %']}
        shape="M0 94L10 92L17 68L30 58L45 52L54 44L57 37L62 35L65 30L68 37L80 36L87 40L88 20L90 0L92 20L94 52L99 55L105 50L111 45L114 57L122 61L128 63L132 72L142 83L155 88L172 92L188 94L188 95L0 95Z"
      />
      <Corner viewBox="2177 1674 260 274" aria-hidden="true">
        <g transform="translate(2110 1440) scale(.3333)">
          <path d="M588 806V1040" stroke="#d81010" strokeWidth="14" />
          <path d="M590 1036H818" stroke="#00d800" strokeWidth="14" />
          <g fill="#00f500" stroke="#048c04" strokeWidth="3">
            <circle cx="588" cy="1210" r="50" />
            <circle cx="588" cy="1333" r="90" stroke="none" />
            <circle cx="588" cy="1287" r="28" />
            <circle cx="588" cy="1273" r="29" />
            <circle cx="588" cy="1259" r="27" />
            <circle cx="650" cy="1216" r="14" fill="#ff1a1a" stroke="none" />
            <circle cx="588" cy="1430" r="34" />
            <circle cx="588" cy="1462" r="29" />
            <circle cx="588" cy="1490" r="24" />
            <circle cx="618" cy="1490" r="26" fill="#00f0ff" stroke="none" />
          </g>
          <path d="M257 1453L267 1468H289L281 1484L289 1500H267L257 1516L247 1500H226L233 1484L226 1468H247Z" fill="#0000ff" />
        </g>
      </Corner>
      <Readout $x={248} $bottom={3}>X: -0.00 cm</Readout>
    </Viewport>
  </Panel>
);

/* ---------- dose volume histogram ---------- */

const Tabs = styled.nav`
  display: flex;
  gap: 3px;
  padding-right: 3px;
  height: 36px;
  background: #3a4656;
`;

const Tab = styled.button<{ $on?: boolean }>`
  width: 62px;
  padding: 0;
  border: 0;
  background: ${(p) => (p.$on ? '#e4e8f6' : slate)};
  color: ${(p) => (p.$on ? '#101018' : '#fff')};
  font: 400 21px/34px ${font};
  &:disabled { background: #a9acaf; color: #6e7072; }
`;

const Chart = styled.div`
  flex: 1;
  min-height: 0;
  display: grid;
  grid-template-columns: 34px 94px minmax(0, 1fr);
  grid-template-rows: 28px 33px minmax(0, 1fr) 35px 63px 26px;
  border: 0 solid #0a0d12;
  border-width: 2px 0;
  background: #fff;
  color: #222;
`;

const AxisTitle = styled.div<{ $row: number }>`
  grid-column: 3;
  grid-row: ${(p) => p.$row};
  align-self: ${(p) => (p.$row === 1 ? 'end' : 'start')};
  text-align: center;
  line-height: 22px;
`;

const YTitle = styled.div`
  grid-column: 1;
  grid-row: 3;
  justify-self: center;
  align-self: center;
  writing-mode: vertical-rl;
  transform: rotate(180deg);
  white-space: nowrap;
`;

const Axis = styled.div<{ $row: number }>`
  position: relative;
  grid-column: 3;
  grid-row: ${(p) => p.$row};
`;

const XTick = styled.span<{ $low?: boolean }>`
  position: absolute;
  top: ${(p) => (p.$low ? 12 : -1)}px;
  transform: translateX(-50%);
`;

const YAxis = styled.div`
  position: relative;
  grid-column: 2;
  grid-row: 3;
`;

const YTick = styled.span`
  position: absolute;
  right: 12px;
  transform: translateY(-50%);
`;

const Plot = styled.svg`
  grid-column: 3;
  grid-row: 3;
  width: 100%;
  height: 100%;
  overflow: visible;
  path { vector-effect: non-scaling-stroke; fill: none; }
`;

const X_MAX = 102.84;
const grays = ['0', '0.2105', '0.4210', '0.6315', '0.8421', '1.0526', '1.2631', '1.4736', '1.6842', '1.8947', '2.1052'];
const curve: [number, number][] = [
  [0, 100], [88.4, 100], [90, 99.7], [91, 99.2], [92, 98.3], [92.8, 97.2], [93.9, 96], [95, 94.2],
  [95.6, 92.2], [96.1, 89.4], [97.05, 82.9], [97.75, 75.5], [98.05, 69], [98.36, 62], [98.77, 51],
  [99.07, 40], [99.37, 32.5], [100, 20], [100.5, 12.2], [101, 6], [101.4, 2.1], [101.8, 0.3], [102.1, 0], [X_MAX, 0],
];

const smooth = (data: [number, number][]) => {
  const pts = data.map(([x, y]) => [x, 100 - y]);
  let d = `M${pts[0].join(' ')}L${pts[1].join(' ')}`;
  for (let i = 1; i < pts.length - 1; i++) {
    const p0 = i === 1 ? pts[1] : pts[i - 1];
    const [p1, p2] = [pts[i], pts[i + 1]];
    const p3 = pts[i + 2] ?? p2;
    d += `C${p1[0] + (p2[0] - p0[0]) / 6} ${p1[1] + (p2[1] - p0[1]) / 6} ${p2[0] - (p3[0] - p1[0]) / 6} ${p2[1] - (p3[1] - p1[1]) / 6} ${p2.join(' ')}`;
  }
  return d;
};

const minorX = Array.from({ length: 103 }, (_, i) => `M${i} 0V100`).join('');
const minorY = Array.from({ length: 21 }, (_, i) => `M0 ${i * 5}H${X_MAX}`).join('');
const majorX = Array.from({ length: 11 }, (_, i) => `M${i * 10} -1V101.2`).join('');
const majorY = Array.from({ length: 6 }, (_, i) => `M-.4 ${i * 20}H${X_MAX}`).join('');

const Footnote = styled.div`
  grid-column: 3;
  grid-row: 6;
  align-self: start;
  text-align: center;
  line-height: 22px;
`;

const DoseVolume = () => (
  <Panel>
    <TitleBar>
      <Tabs>
        <Tab>3D</Tab>
        <Tab $on>DVH</Tab>
        <Tab>BEV</Tab>
        <Tab disabled>Arc</Tab>
      </Tabs>
      <Title>1-24 2Gy6MV - Unapproved - Dose Volume Histogram</Title>
    </TitleBar>
    <Chart>
      <AxisTitle $row={1}>Dose [Gy]</AxisTitle>
      <Axis $row={2}>
        {grays.map((g, i) => (
          <XTick key={g} style={{ left: `${(i * 1000) / X_MAX}%` }}>{g}</XTick>
        ))}
      </Axis>
      <YTitle>Ratio of Total Structure Volume [%]</YTitle>
      <YAxis>
        {[100, 80, 60, 40, 20, 0].map((v) => (
          <YTick key={v} style={{ top: `${100 - v}%` }}>{v}</YTick>
        ))}
      </YAxis>
      <Plot viewBox={`0 0 ${X_MAX} 100`} preserveAspectRatio="none" aria-label="Dose volume histogram">
        <rect width={X_MAX} height="100" fill="#f4f4f4" />
        <path d={minorX} stroke="#dfdfdf" strokeWidth="2" />
        <path d={minorY} stroke="#dcdcdc" strokeWidth="2" />
        <path d={majorX} stroke="#b9b9b9" strokeWidth="3" />
        <path d={majorY} stroke="#b9b9b9" strokeWidth="3" />
        <path d={`M0 0V100H${X_MAX}`} stroke="#555" strokeWidth="1" />
        <path d={smooth(curve)} stroke="#f51d1d" strokeWidth="4" />
      </Plot>
      <Axis $row={4}>
        {grays.map((g, i) => (
          <XTick key={g} $low style={{ left: `${(i * 1000) / X_MAX}%` }}>{i * 10}</XTick>
        ))}
      </Axis>
      <AxisTitle $row={5}>Relative dose [%]</AxisTitle>
      <Footnote>Some structures are unapproved or rejected</Footnote>
    </Chart>
  </Panel>
);

export default function App() {
  return (
    <>
      <GlobalStyle />
      <Page>
        <Workspace>
          <Transversal />
          <DoseVolume />
          <Frontal />
          <Sagittal />
        </Workspace>
      </Page>
    </>
  );
}
